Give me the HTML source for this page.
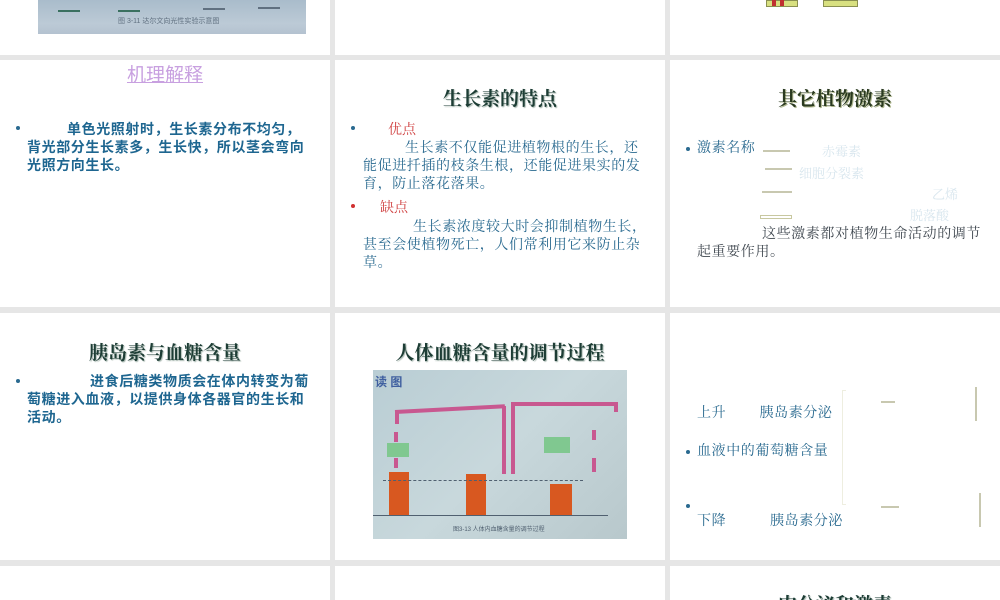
<!DOCTYPE html>
<html><head><meta charset="utf-8"><style>
*{margin:0;padding:0;box-sizing:border-box}
body{width:1000px;height:600px;background:#e6e6e6;position:relative;overflow:hidden;font-family:"Liberation Sans","Noto Sans CJK SC",sans-serif}
.s{position:absolute;background:#fff;overflow:hidden}
.a{position:absolute;white-space:nowrap}
.t{font-family:"Liberation Serif","Noto Serif CJK SC",serif;font-weight:bold;font-size:19px;color:#1d3d35;text-shadow:1px 1px 1px #a8b8b0}
.b{font-size:14px;color:#2a6a90;line-height:18px;letter-spacing:0.6px}
.sr{font-family:"Liberation Serif","Noto Serif CJK SC",serif}
.bb{font-weight:bold;color:#1e6690}
.dot{position:absolute;width:4px;height:4px;border-radius:2px;background:#2a6a90}
.f{font-size:13px;color:#d8e6ee}
.ln{position:absolute;height:2px;background:#c8c8b0}
.pk{position:absolute;background:#c85890}
</style></head><body>
<!-- row 1 -->
<div class="s" style="left:0;top:0;width:330px;height:55px">
 <div style="position:absolute;left:38px;top:0;width:268px;height:34px;background:linear-gradient(#a9bccb,#bccad6 70%,#b4c2d0)">
  <div style="position:absolute;left:20px;top:10px;width:22px;height:2px;background:#3a7060"></div>
  <div style="position:absolute;left:80px;top:10px;width:22px;height:2px;background:#3a7060"></div>
  <div style="position:absolute;left:165px;top:8px;width:22px;height:2px;background:#607080"></div>
  <div style="position:absolute;left:220px;top:7px;width:22px;height:2px;background:#607080"></div>
  <div class="a" style="left:80px;top:16px;font-size:7px;color:#607080">图 3-11 达尔文向光性实验示意图</div>
 </div>
</div>
<div class="s" style="left:335px;top:0;width:330px;height:55px"></div>
<div class="s" style="left:670px;top:0;width:330px;height:55px">
 <div style="position:absolute;left:96px;top:0;width:32px;height:7px;background:#d8e080;border:1px solid #8a9050"></div>
 <div style="position:absolute;left:102px;top:0;width:4px;height:6px;background:#c03030"></div>
 <div style="position:absolute;left:110px;top:0;width:4px;height:6px;background:#c03030"></div>
 <div style="position:absolute;left:153px;top:0;width:35px;height:7px;background:#d8e080;border:1px solid #8a9050"></div>
</div>
<!-- row 2 -->
<div class="s" style="left:0;top:60px;width:330px;height:247px">
 <div class="a" style="left:0;width:330px;text-align:center;top:0;font-size:19px;color:#c8a0e0;text-decoration:underline">机理解释</div>
 <div class="dot" style="left:16px;top:66px"></div>
 <div class="a b bb" style="left:27px;top:60px;white-space:normal;width:283px;text-indent:40px">单色光照射时，生长素分布不均匀，背光部分生长素多，生长快，所以茎会弯向光照方向生长。</div>
</div>
<div class="s" style="left:335px;top:60px;width:330px;height:247px">
 <div class="a t" style="left:0;width:330px;text-align:center;top:24px">生长素的特点</div>
 <div class="dot" style="left:16px;top:66px"></div>
 <div class="a sr" style="left:53px;top:59px;font-size:14px;color:#d04040">优点</div>
 <div class="a b sr" style="left:28px;top:80px;white-space:normal;width:283px;text-indent:42px">生长素不仅能促进植物根的生长，还能促进扦插的枝条生根，还能促进果实的发育，防止落花落果。</div>
 <div class="dot" style="left:16px;top:144px;background:#d03030"></div>
 <div class="a sr" style="left:45px;top:137px;font-size:14px;color:#d04040">缺点</div>
 <div class="a b sr" style="left:28px;top:159px;white-space:normal;width:290px;text-indent:50px">生长素浓度较大时会抑制植物生长，甚至会使植物死亡，人们常利用它来防止杂草。</div>
</div>
<div class="s" style="left:670px;top:60px;width:330px;height:247px">
 <div class="a t" style="left:0;width:330px;text-align:center;top:24px;color:#2a3a20;text-shadow:1px 1px 0 #b0b890">其它植物激素</div>
 <div class="dot" style="left:16px;top:87px"></div>
 <div class="a b sr" style="left:27px;top:80px">激素名称</div>
 <div class="ln" style="left:93px;top:90px;width:27px"></div>
 <div class="ln" style="left:95px;top:108px;width:27px"></div>
 <div class="ln" style="left:92px;top:131px;width:30px"></div>
 <div class="ln" style="left:90px;top:155px;width:32px;height:4px;background:none;border:1px solid #c8c8a0"></div>
 <div class="a f sr" style="left:152px;top:81px">赤霉素</div>
 <div class="a f sr" style="left:129px;top:103px">细胞分裂素</div>
 <div class="a f sr" style="left:262px;top:124px">乙烯</div>
 <div class="a f sr" style="left:240px;top:145px">脱落酸</div>
 <div class="a b sr" style="left:27px;top:166px;white-space:normal;width:286px;text-indent:65px;color:#404850">这些激素都对植物生命活动的调节起重要作用。</div>
</div>
<!-- row 3 -->
<div class="s" style="left:0;top:313px;width:330px;height:247px">
 <div class="a t" style="left:0;width:330px;text-align:center;top:25px">胰岛素与血糖含量</div>
 <div class="dot" style="left:16px;top:66px"></div>
 <div class="a b bb" style="left:27px;top:59px;white-space:normal;width:285px;text-indent:63px">进食后糖类物质会在体内转变为葡萄糖进入血液，以提供身体各器官的生长和活动。</div>
</div>
<div class="s" style="left:335px;top:313px;width:330px;height:247px">
 <div class="a t" style="left:0;width:330px;text-align:center;top:25px">人体血糖含量的调节过程</div>
 <div style="position:absolute;left:38px;top:57px;width:254px;height:169px;background:linear-gradient(135deg,#b9cdd4,#c8d8dc 50%,#b8c8cc)">
  <div class="a" style="left:2px;top:3px;font-size:12px;font-weight:bold;color:#4060a0">读 图</div>
  <div class="pk" style="left:22px;top:42px;width:4px;height:12px"></div>
  <div class="pk" style="left:22px;top:40px;width:110px;height:4px;transform:rotate(-3deg);transform-origin:left"></div>
  <div class="pk" style="left:129px;top:36px;width:4px;height:68px"></div>
  <div class="pk" style="left:138px;top:34px;width:4px;height:70px"></div>
  <div class="pk" style="left:138px;top:32px;width:106px;height:4px"></div>
  <div class="pk" style="left:241px;top:32px;width:4px;height:10px"></div>
  <div class="pk" style="left:21px;top:62px;width:4px;height:10px"></div>
  <div class="pk" style="left:21px;top:88px;width:4px;height:10px"></div>
  <div class="pk" style="left:219px;top:60px;width:4px;height:10px"></div>
  <div class="pk" style="left:219px;top:88px;width:4px;height:14px"></div>
  <div style="position:absolute;left:14px;top:73px;width:22px;height:14px;background:#80c890"></div>
  <div style="position:absolute;left:171px;top:67px;width:26px;height:16px;background:#80c890"></div>
  <div style="position:absolute;left:16px;top:102px;width:20px;height:44px;background:#d85820"></div>
  <div style="position:absolute;left:93px;top:104px;width:20px;height:42px;background:#d85820"></div>
  <div style="position:absolute;left:177px;top:114px;width:22px;height:32px;background:#d85820"></div>
  <div style="position:absolute;left:10px;top:110px;width:200px;border-top:1px dashed #506070"></div>
  <div style="position:absolute;left:0;top:145px;width:235px;height:1px;background:#506070"></div>
  <div class="a" style="left:80px;top:154px;font-size:6px;color:#506070">图3-13 人体内血糖含量的调节过程</div>
 </div>
</div>
<div class="s" style="left:670px;top:313px;width:330px;height:247px">
 <div class="a b sr" style="left:27px;top:92px">上升　　 胰岛素分泌</div>
 <div class="dot" style="left:16px;top:137px"></div>
 <div class="a b sr" style="left:27px;top:130px">血液中的葡萄糖含量</div>
 <div class="dot" style="left:16px;top:191px"></div>
 <div class="a b sr" style="left:27px;top:200px">下降　　　胰岛素分泌</div>
 <div style="position:absolute;left:172px;top:77px;width:4px;height:115px;border-left:1px solid #eeeee0;border-top:1px solid #eeeee0;border-bottom:1px solid #eeeee0"></div>
 <div class="ln" style="left:211px;top:88px;width:14px"></div>
 <div class="ln" style="left:211px;top:193px;width:18px"></div>
 <div style="position:absolute;left:305px;top:74px;width:2px;height:34px;background:#c8c8b0"></div>
 <div style="position:absolute;left:309px;top:180px;width:2px;height:34px;background:#c8c8b0"></div>
</div>
<!-- row 4 -->
<div class="s" style="left:0;top:566px;width:330px;height:34px"></div>
<div class="s" style="left:335px;top:566px;width:330px;height:34px"></div>
<div class="s" style="left:670px;top:566px;width:330px;height:34px">
 <div class="a t" style="left:0;width:330px;text-align:center;top:24px">内分泌和激素</div>
</div>
</body></html>
